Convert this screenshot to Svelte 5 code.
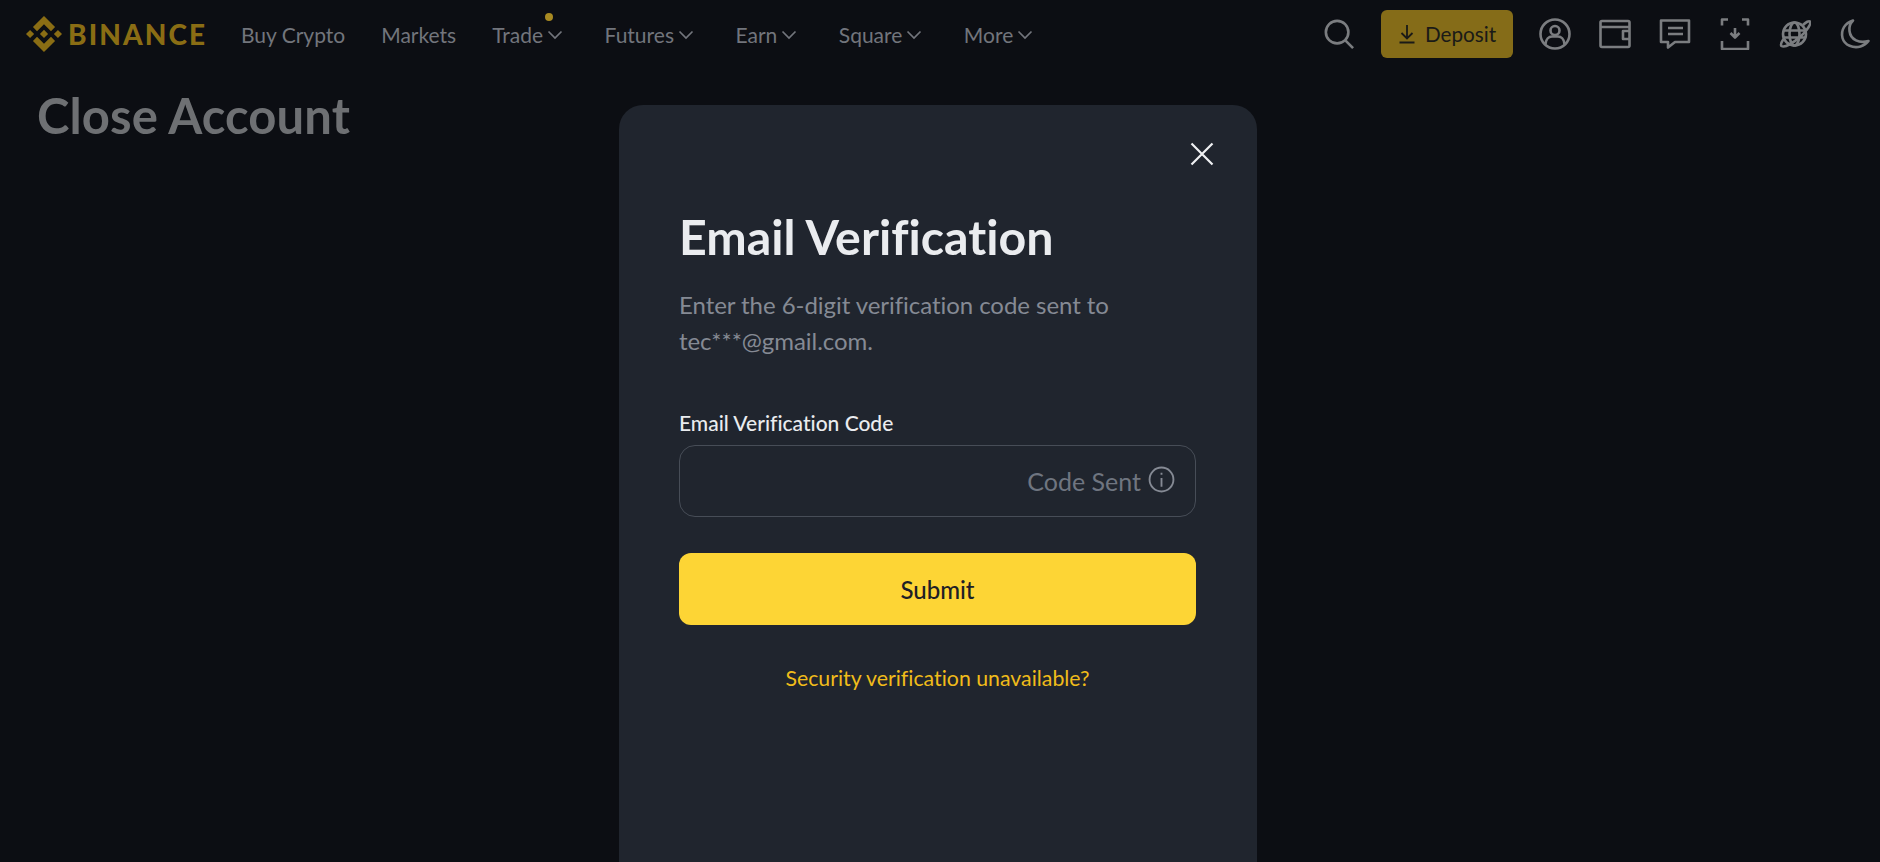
<script>
  const navItems = [
    { label: 'Buy Crypto', chevron: false },
    { label: 'Markets', chevron: false },
    { label: 'Trade', chevron: true, dot: true },
    { label: 'Futures', chevron: true },
    { label: 'Earn', chevron: true },
    { label: 'Square', chevron: true },
    { label: 'More', chevron: true }
  ];
</script>

<div class="page">
  <header class="nav">
    <div class="brand">
      <svg class="mark" viewBox="0 0 126.61 126.61" aria-hidden="true">
        <polygon points="38.73 53.2 63.3 28.63 87.89 53.22 102.19 38.92 63.3 0 24.42 38.9 38.73 53.2" />
        <polygon points="0 63.31 14.3 49 28.61 63.31 14.3 77.61" />
        <polygon points="38.73 73.41 63.3 97.98 87.89 73.4 102.19 87.69 63.3 126.61 24.42 87.71" />
        <polygon points="98 63.31 112.3 49 126.61 63.31 112.3 77.61" />
        <polygon points="77.81 63.3 63.31 48.78 48.81 63.28 63.31 77.8" />
      </svg>
      <span class="wordmark">BINANCE</span>
    </div>
    <nav class="links">
      {#each navItems as item}
        <div class="link">
          <span>{item.label}</span>
          {#if item.chevron}
            <svg class="chev" viewBox="0 0 16 10" aria-hidden="true"><path d="M1.5 1.5 8 8l6.5-6.5" /></svg>
          {/if}
          {#if item.dot}<i class="dot"></i>{/if}
        </div>
      {/each}
    </nav>
    <div class="tools">
      <svg class="search" viewBox="0 0 32 32" aria-hidden="true"><circle cx="14" cy="14" r="12" /><path d="M23 23l8 8" /></svg>
      <div class="deposit">
        <svg viewBox="0 0 18 20" aria-hidden="true"><path d="M9 1v13M3.5 9 9 14.500 14.500 9M1.500 18.500h15" /></svg>
        <span>Deposit</span>
      </div>
      <div class="icons">
        <svg viewBox="0 0 32 32" aria-hidden="true"><circle cx="16" cy="16" r="14.500" /><circle cx="16" cy="12.500" r="4.500" /><path d="M6.500 26c.5-5 3.500-7.500 6.500-7.500h6c3 0 6 2.500 6.500 7.500" /></svg>
        <svg viewBox="0 0 32 32" aria-hidden="true"><rect x="1.500" y="3" width="29" height="26" rx="1.500" /><path d="M1.500 9h29M30.500 13h-6.500v8h6.500" /></svg>
        <svg viewBox="0 0 32 32" aria-hidden="true"><path d="M2 2.500h28V24H16l-7 5.500V24H2zM9 10h15M9 16h15" /></svg>
        <svg viewBox="0 0 32 32" aria-hidden="true"><path d="M9 1.500H3v6M23 1.500h6v6M3 23v8h26v-8M16 10v9M11.500 15l4.500 4.500 4.500-4.500" /></svg>
        <svg viewBox="0 0 32 32" aria-hidden="true"><circle cx="15.500" cy="16" r="11.500" /><ellipse cx="15.500" cy="16" rx="5" ry="11.500" /><path d="M4.500 12.500h22M4.500 19.500h22M24 7c3-3 6-4.500 7-3.500 1.500 2-3 9.500-10 15.500S5.500 30 2.500 28c-1-1 0-4 2-7" /></svg>
        <svg viewBox="0 0 32 32" aria-hidden="true"><path d="M14 2.500C6 5 1.500 12 3.500 20c2 7.500 11 10.500 18 8.500 3.500-1 6-3 8-5.500-9 2.500-18-1-19-10-.5-4 1-8 3.500-10.500z" /></svg>
      </div>
    </div>
  </header>

  <h1 class="page-title">Close Account</h1>

  <section class="modal">
    <svg class="close" viewBox="0 0 24 24" aria-hidden="true"><path d="M1.500 1.500l21 21M22.500 1.500l-21 21" /></svg>
    <h2>Email Verification</h2>
    <p class="desc">Enter the 6-digit verification code sent to<br />tec***@gmail.com.</p>
    <div class="label">Email Verification Code</div>
    <div class="field">
      <span>Code Sent</span>
      <svg viewBox="0 0 26 26" aria-hidden="true"><circle cx="13" cy="13" r="11.500" /><path d="M13 11.500V20M13 6.500v2" /></svg>
    </div>
    <button class="submit">Submit</button>
    <div class="help">Security verification unavailable?</div>
  </section>
</div>

<style>
  :global(body) {
    margin: 0;
    background: #0c0e13;
  }
  .page {
    position: relative;
    height: 862px;
    overflow: hidden;
    background: #0c0e13;
    font-family: Lato, "Open Sans", sans-serif;
    font-variant-ligatures: none;
    color: #6f7580;
  }
  .nav {
    display: flex;
    align-items: center;
    height: 68px;
    padding-left: 26px;
  }
  .brand {
    display: flex;
    align-items: center;
    gap: 6px;
    width: 215px;
  }
  .mark {
    width: 36px;
    height: 36px;
    fill: #8a6d14;
  }
  .wordmark {
    font-size: 28px;
    font-weight: 900;
    letter-spacing: 2.1px;
    color: #8a6d14;
  }
  .links {
    display: flex;
    gap: 36px;
    padding-top: 2px;
    font-size: 21px;
    color: #72757c;
  }
  .link {
    position: relative;
    display: flex;
    align-items: center;
    gap: 4px;
    line-height: 28px;
  }
  .chev {
    width: 16px;
    height: 10px;
    margin-right: 5.500px;
    fill: none;
    stroke: #72757c;
    stroke-width: 1.700;
  }
  .dot {
    position: absolute;
    top: -8px;
    right: 16px;
    width: 8px;
    height: 8px;
    border-radius: 50%;
    background: #a88a22;
  }
  .tools {
    display: flex;
    align-items: center;
    margin-left: auto;
  }
  .search {
    width: 30px;
    height: 30px;
    margin-right: 27px;
    fill: none;
    stroke: #7b7d80;
    stroke-width: 2.800;
  }
  .deposit {
    display: flex;
    align-items: center;
    justify-content: center;
    gap: 9px;
    width: 132px;
    height: 48px;
    border-radius: 6px;
    background: #856c18;
    color: #1a1a17;
    font-size: 20.700px;
  }
  .deposit svg {
    width: 18px;
    height: 20px;
    fill: none;
    stroke: #1a1a17;
    stroke-width: 1.800;
  }
  .icons {
    display: flex;
    gap: 28px;
    margin-left: 26px;
    margin-right: 9px;
  }
  .icons svg {
    width: 32px;
    height: 32px;
    fill: none;
    stroke: #7b7d80;
    stroke-width: 2.600;
    stroke-linejoin: round;
  }
  .page-title {
    margin: 0;
    padding: 21px 0 0 37px;
    font-size: 49px;
    line-height: 52px;
    font-weight: 700;
    letter-spacing: 0.100px;
    color: #6e7073;
  }
  .modal {
    position: absolute;
    top: 105px;
    left: 619px;
    width: 638px;
    height: 800px;
    box-sizing: border-box;
    padding: 105px 61px 0 60px;
    border-radius: 24px;
    background: #20252e;
  }
  .close {
    position: absolute;
    top: 37px;
    right: 43px;
    width: 24px;
    height: 24px;
    fill: none;
    stroke: #f0f1f3;
    stroke-width: 2.200;
  }
  h2 {
    margin: 0;
    font-size: 48.300px;
    line-height: 52px;
    font-weight: 700;
    color: #eaecef;
  }
  .desc {
    margin: 25px 0 0;
    font-size: 24px;
    line-height: 36px;
    letter-spacing: -0.050px;
    color: #858a94;
  }
  .label {
    margin-top: 50px;
    font-size: 21px;
    line-height: 28px;
    font-weight: 500;
    color: #eaecef;
  }
  .field {
    display: flex;
    align-items: center;
    justify-content: flex-end;
    gap: 7px;
    box-sizing: border-box;
    height: 72px;
    margin-top: 8px;
    padding-right: 20px;
    border: 1px solid #474d57;
    border-radius: 16px;
    font-size: 25px;
    color: #6f7580;
  }
  .field svg {
    width: 27px;
    height: 27px;
    margin-top: -3px;
    fill: none;
    stroke: #858a94;
    stroke-width: 1.800;
  }
  .submit {
    display: block;
    width: 100%;
    height: 72px;
    margin-top: 36px;
    border: 0;
    border-radius: 12px;
    background: #fdd535;
    color: #1e2026;
    font: 500 24px Lato, sans-serif;
  }
  .help {
    margin-top: 39px;
    text-align: center;
    font-size: 21.300px;
    line-height: 28px;
    color: #f0bc1a;
  }
</style>
